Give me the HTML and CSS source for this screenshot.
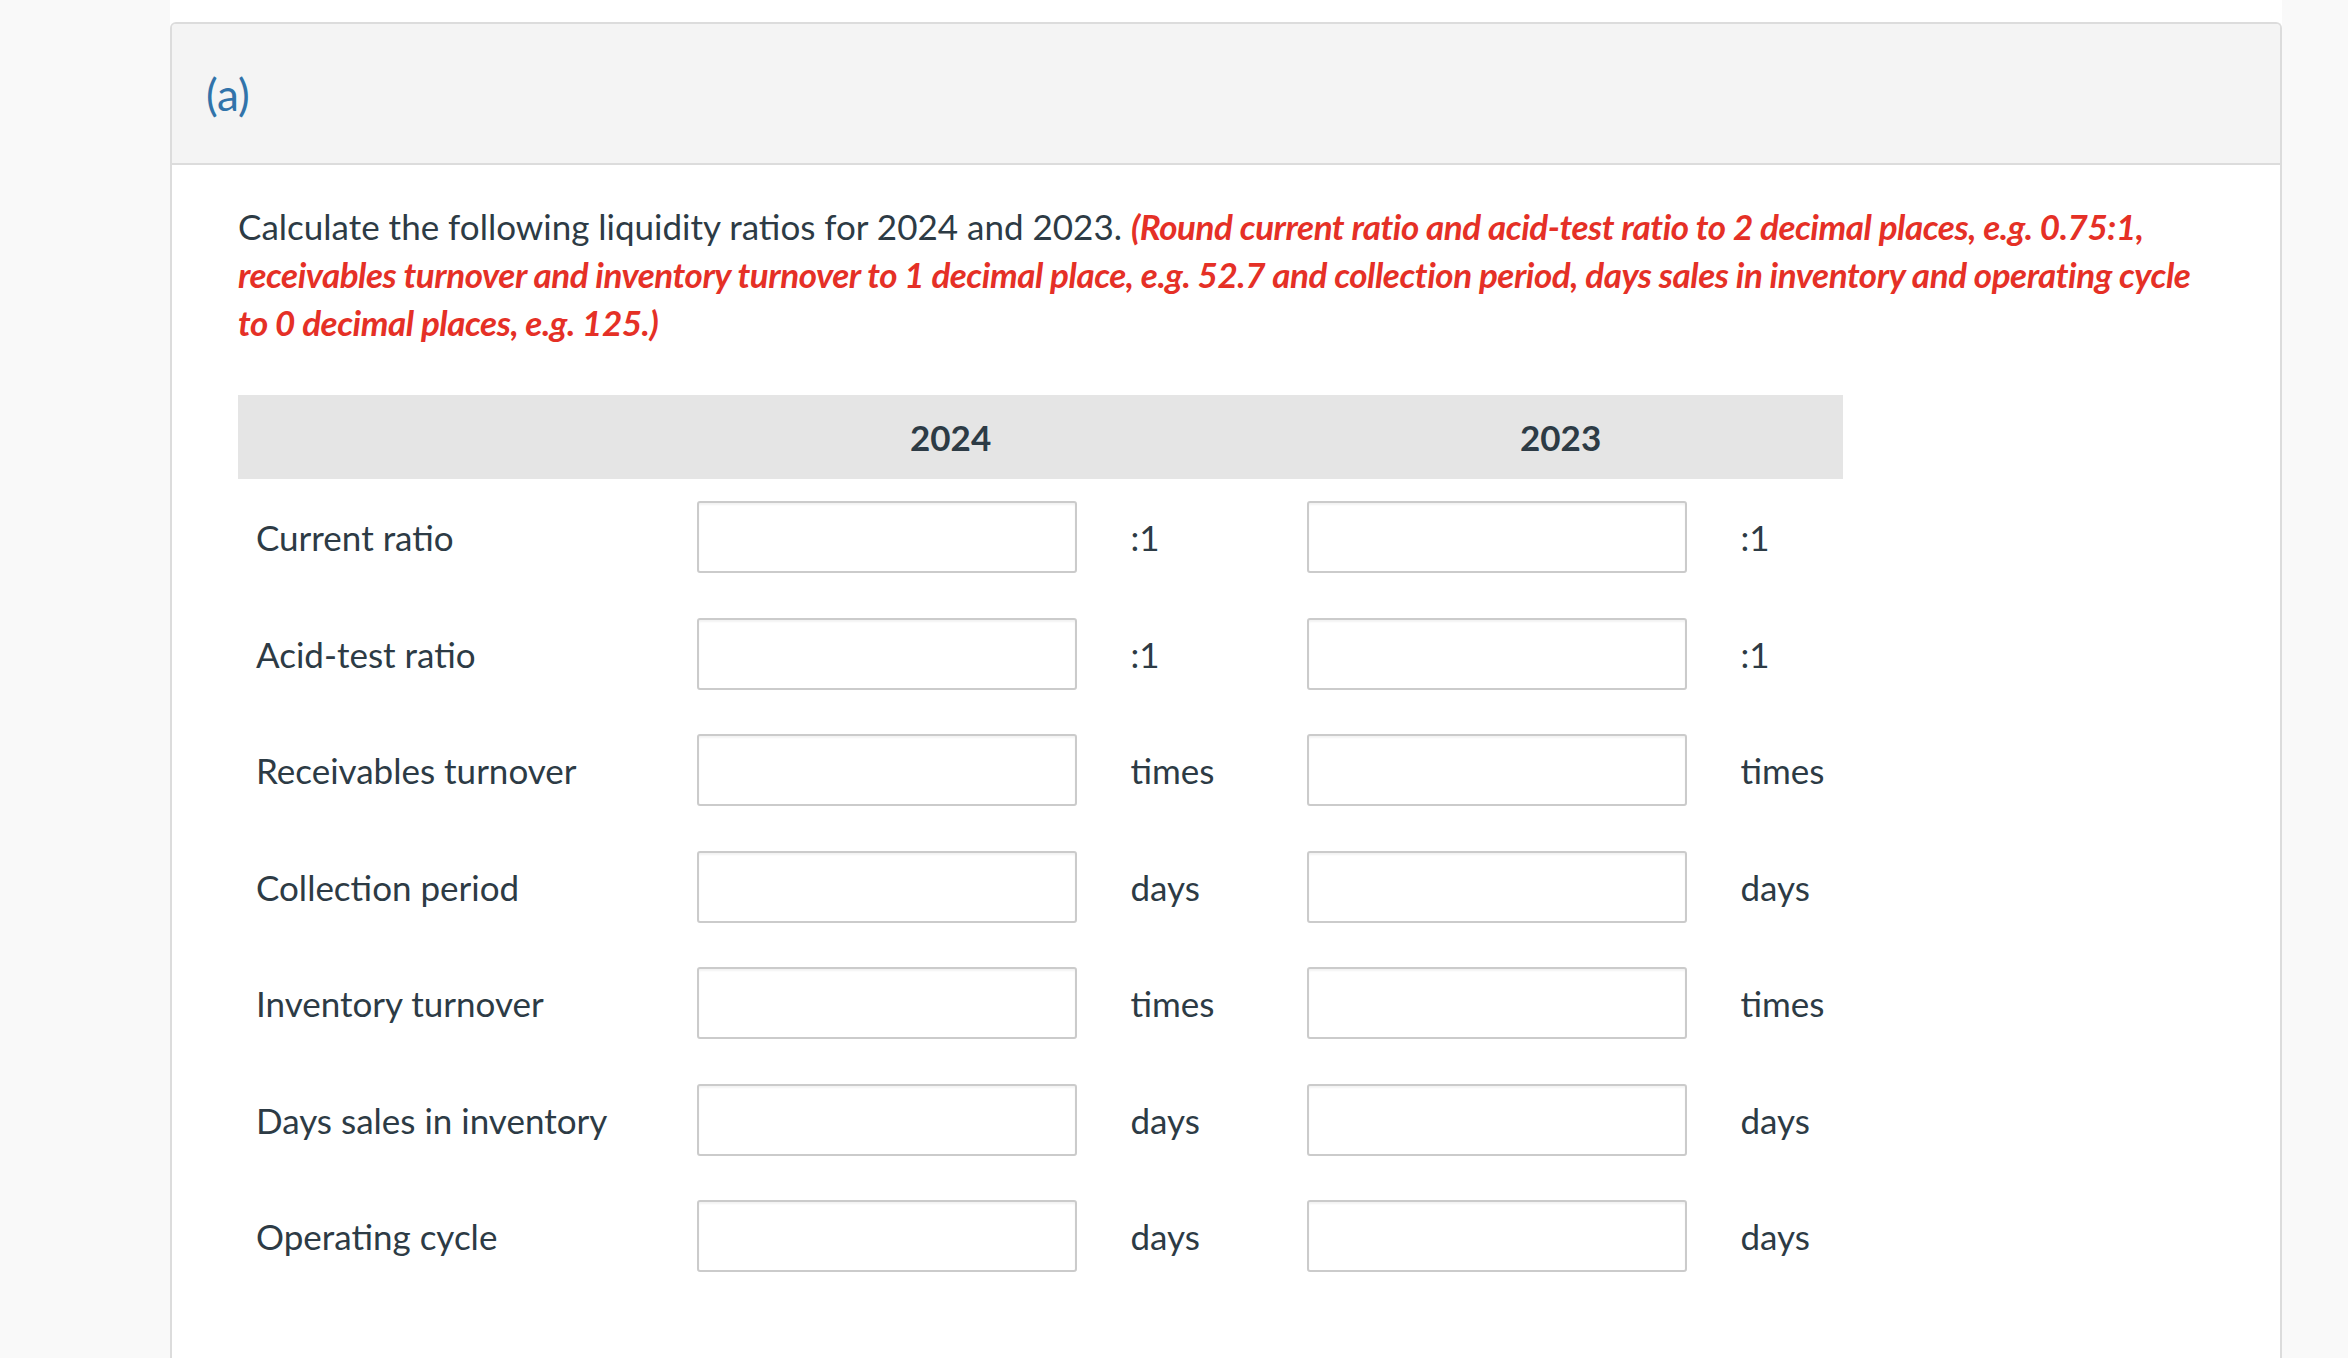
FILE: index.html
```html
<!DOCTYPE html>
<html lang="en">
<head>
<meta charset="utf-8">
<title>Liquidity ratios</title>
<link rel="stylesheet" href="styles.css">
</head>
<body>
<div class="column">
  <section class="card">
    <header class="card-header">
      <span class="part">(a)</span>
    </header>
    <div class="card-body">
      <p class="question">Calculate the following liquidity ratios for 2024 and 2023. <em class="hint">(Round current ratio and acid-test ratio to 2 decimal places, e.g. 0.75:1, receivables turnover and inventory turnover to 1 decimal place, e.g. 52.7 and collection period, days sales in inventory and operating cycle to 0 decimal places, e.g. 125.)</em></p>

      <div class="ratio-table">
        <div class="th th-blank"></div>
        <div class="th th-year">2024</div>
        <div class="th th-year">2023</div>

        <div class="label">Current ratio</div>
        <div class="cell"><input class="answer" type="text"></div>
        <div class="unit">:1</div>
        <div class="cell"><input class="answer" type="text"></div>
        <div class="unit">:1</div>

        <div class="label">Acid-test ratio</div>
        <div class="cell"><input class="answer" type="text"></div>
        <div class="unit">:1</div>
        <div class="cell"><input class="answer" type="text"></div>
        <div class="unit">:1</div>

        <div class="label">Receivables turnover</div>
        <div class="cell"><input class="answer" type="text"></div>
        <div class="unit">times</div>
        <div class="cell"><input class="answer" type="text"></div>
        <div class="unit">times</div>

        <div class="label">Collection period</div>
        <div class="cell"><input class="answer" type="text"></div>
        <div class="unit">days</div>
        <div class="cell"><input class="answer" type="text"></div>
        <div class="unit">days</div>

        <div class="label">Inventory turnover</div>
        <div class="cell"><input class="answer" type="text"></div>
        <div class="unit">times</div>
        <div class="cell"><input class="answer" type="text"></div>
        <div class="unit">times</div>

        <div class="label">Days sales in inventory</div>
        <div class="cell"><input class="answer" type="text"></div>
        <div class="unit">days</div>
        <div class="cell"><input class="answer" type="text"></div>
        <div class="unit">days</div>

        <div class="label">Operating cycle</div>
        <div class="cell"><input class="answer" type="text"></div>
        <div class="unit">days</div>
        <div class="cell"><input class="answer" type="text"></div>
        <div class="unit">days</div>
      </div>
    </div>
  </section>
</div>
</body>
</html>
```

FILE: styles.css
```css
html, body {
  margin: 0;
  padding: 0;
}

body {
  background: #f9f9f9;
  font-family: Lato, "Liberation Sans", sans-serif;
  color: #2d3b45;
  overflow: hidden;
}

.column {
  margin-left: 170px;
  width: 2112px;
  background: #ffffff;
  padding-top: 22px;
  min-height: 1400px;
  box-sizing: border-box;
}

.card {
  border: 2px solid #dcdcdc;
  border-bottom: none;
  border-radius: 6px 6px 0 0;
  min-height: 1400px;
}

.card-header {
  background: #f4f4f4;
  border-bottom: 2px solid #dcdcdc;
  border-radius: 4px 4px 0 0;
  height: 139px;
  display: flex;
  align-items: center;
  padding-left: 34px;
}

.part {
  font-size: 44px;
  color: #3173aa;
  line-height: 1;
}

.card-body {
  padding: 36.5px 66px 80px 66px;
}

.question {
  margin: 0;
  font-size: 35px;
  line-height: 48px;
  color: #2d3b45;
}

.hint {
  font-weight: 700;
  font-style: italic;
  color: #e53026;
  letter-spacing: -0.45px;
}

.ratio-table {
  margin-top: 49.5px;
  width: 1605px;
  display: grid;
  grid-template-columns: 459px 380px 230px 380px 156px;
  font-size: 35px;
}

.th {
  background: #e5e5e5;
  height: 84px;
  display: flex;
  align-items: center;
}

.th-year {
  grid-column: span 2;
  padding-left: 213px;
  font-weight: 700;
}

.label {
  display: flex;
  align-items: center;
  padding-left: 18px;
}

.cell {
  padding: 22.25px 0;
}

.unit {
  display: flex;
  align-items: center;
  padding-left: 53.5px;
}

.answer {
  display: block;
  box-sizing: border-box;
  width: 380px;
  height: 72px;
  margin: 0;
  border: 2px solid #cbcbcb;
  border-radius: 3px;
  background: #ffffff;
  box-shadow: inset 0 2px 2px rgba(0, 0, 0, 0.05);
  font-family: inherit;
  font-size: 32px;
  padding: 0 14px;
}
```
